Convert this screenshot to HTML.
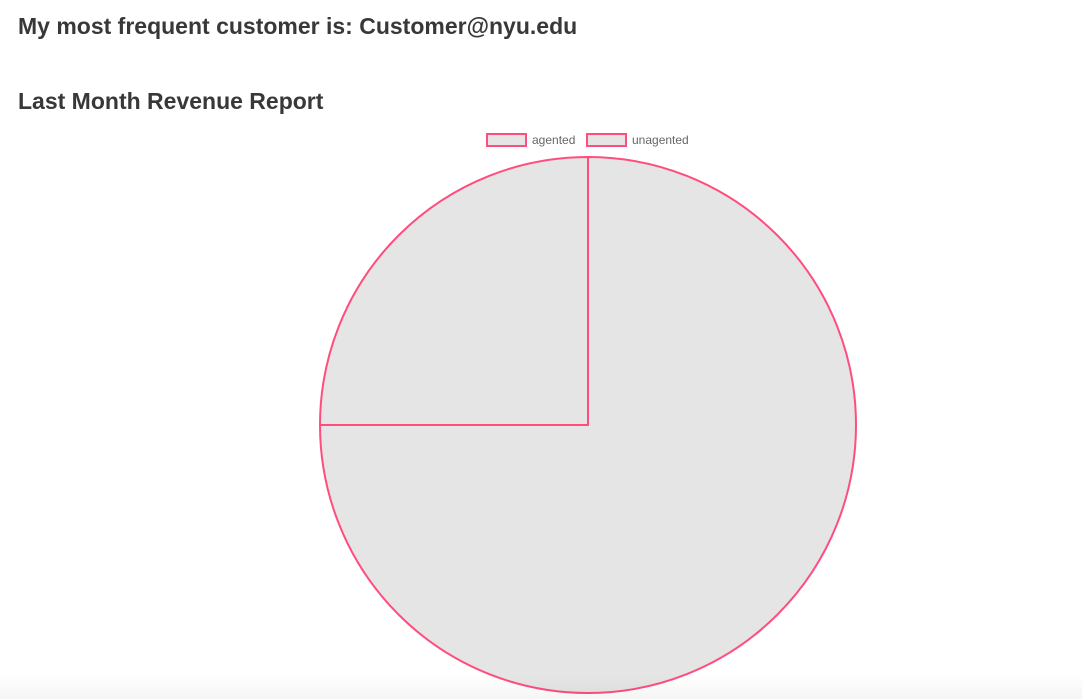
<!DOCTYPE html>
<html><head><style>
html,body{margin:0;padding:0;background:#fff;width:1082px;height:699px;overflow:hidden;position:relative}
.t{position:absolute;left:18px;font-family:"Liberation Sans",sans-serif;font-size:23px;font-weight:bold;color:#383838;white-space:nowrap;line-height:1}
.lg{position:absolute;font-family:"Liberation Sans",sans-serif;font-size:12px;color:#666;line-height:1}
.box{position:absolute;width:37px;height:10px;border:2px solid #ff4d7e;background:#e5e5e5}
.shade{position:absolute;left:0;right:0;bottom:0;height:24px;background:linear-gradient(rgba(0,0,0,0),rgba(0,0,0,0.04))}
</style></head><body>
<div class="t" style="top:15px">My most frequent customer is: Customer@nyu.edu</div>
<div class="t" style="top:90px">Last Month Revenue Report</div>
<div class="box" style="left:486px;top:133px"></div>
<div class="lg" style="left:532px;top:134px">agented</div>
<div class="box" style="left:586px;top:133px"></div>
<div class="lg" style="left:632px;top:134px">unagented</div>
<svg style="position:absolute;left:0;top:0" width="1082" height="699">
<path d="M588 425 L588 157 A268 268 0 1 1 320 425 Z" fill="#e5e5e5" stroke="#ff4d7e" stroke-width="2"/>
<path d="M588 425 L320 425 A268 268 0 0 1 588 157 Z" fill="#e5e5e5" stroke="#ff4d7e" stroke-width="2"/>
</svg>
<div class="shade"></div>
</body></html>
